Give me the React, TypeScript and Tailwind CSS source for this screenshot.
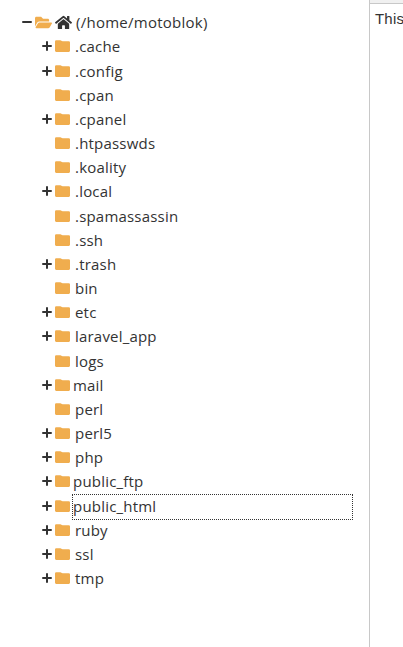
import { FaFolderOpen, FaHome } from "react-icons/fa";

type Entry = { name: string; expandable?: boolean; tight?: boolean; focused?: boolean };

const entries: Entry[] = [
  { name: ".cache", expandable: true },
  { name: ".config", expandable: true },
  { name: ".cpan" },
  { name: ".cpanel", expandable: true },
  { name: ".htpasswds" },
  { name: ".koality" },
  { name: ".local", expandable: true },
  { name: ".spamassassin" },
  { name: ".ssh" },
  { name: ".trash", expandable: true },
  { name: "bin" },
  { name: "etc", expandable: true },
  { name: "laravel_app", expandable: true },
  { name: "logs" },
  { name: "mail", expandable: true, tight: true },
  { name: "perl" },
  { name: "perl5", expandable: true },
  { name: "php", expandable: true },
  { name: "public_ftp", expandable: true, tight: true },
  { name: "public_html", expandable: true, tight: true, focused: true },
  { name: "ruby", expandable: true },
  { name: "ssl", expandable: true },
  { name: "tmp", expandable: true },
];

function Toggle({ open }: { open?: boolean }) {
  return (
    <svg className="size-2.5 shrink-0" viewBox="0 0 10 10" fill="none" stroke="#333" strokeWidth="2" strokeLinecap="round">
      <path d={open ? "M1 5H9" : "M1 5H9M5 1V9"} />
    </svg>
  );
}

function Folder() {
  return (
    <svg className="h-3 w-[15px] shrink-0" viewBox="0 0 15 12" fill="#f0ad4e">
      <path d="M1.2 .3H5.4Q6 .3 6.4 .7L7.6 1.3H13.8Q15 1.3 15 2.4V10.8Q15 11.9 13.8 11.9H1.2Q0 11.9 0 10.8V1.4Q0 .3 1.2 .3Z" />
    </svg>
  );
}

function Row({ entry }: { entry: Entry }) {
  return (
    <li className="flex h-[24.18px] items-center pl-[42px]">
      <span className="flex w-[13px] shrink-0">{entry.expandable && <Toggle />}</span>
      <Folder />
      <span
        className={`mt-0.5 flex h-[26px] shrink-0 items-center pb-0.5 outline-1 -outline-offset-1 outline-dotted ${
          entry.tight ? "ml-0.5 pl-px" : "ml-[5px]"
        } ${entry.focused ? "w-[281px] outline-[#333]" : "outline-transparent"}`}
      >
        {entry.name}
      </span>
    </li>
  );
}

export default function App() {
  return (
    <div className="flex h-[647px] w-[403px] overflow-hidden bg-white text-[#333]">
      <nav className="w-[369px] shrink-0 pt-[10.1px] font-['Open_Sans',sans-serif] text-[15px] leading-6 tracking-[0.2px] whitespace-nowrap">
        <div className="flex h-[24.18px] items-center pl-[22px]">
          <Toggle open />
          <FaFolderOpen className="ml-[3px] size-[17px] shrink-0 text-[#f0ad4e]" />
          <FaHome className="ml-[3px] size-[17px] shrink-0" />
          <span className="ml-1 tracking-[0.26px]">(/home/motoblok)</span>
        </div>
        <ul>
          {entries.map((entry) => (
            <Row key={entry.name} entry={entry} />
          ))}
        </ul>
      </nav>
      <main className="flex-1 border-l border-[#c8c8c8] whitespace-nowrap">
        <div className="h-1 border-b border-[#c8c8c8] bg-[#f0f0f0]" />
        <p className="pt-[5px] pl-[5px] font-['Liberation_Sans',sans-serif] text-[15px] leading-5 tracking-[0.2px]">This</p>
      </main>
    </div>
  );
}
